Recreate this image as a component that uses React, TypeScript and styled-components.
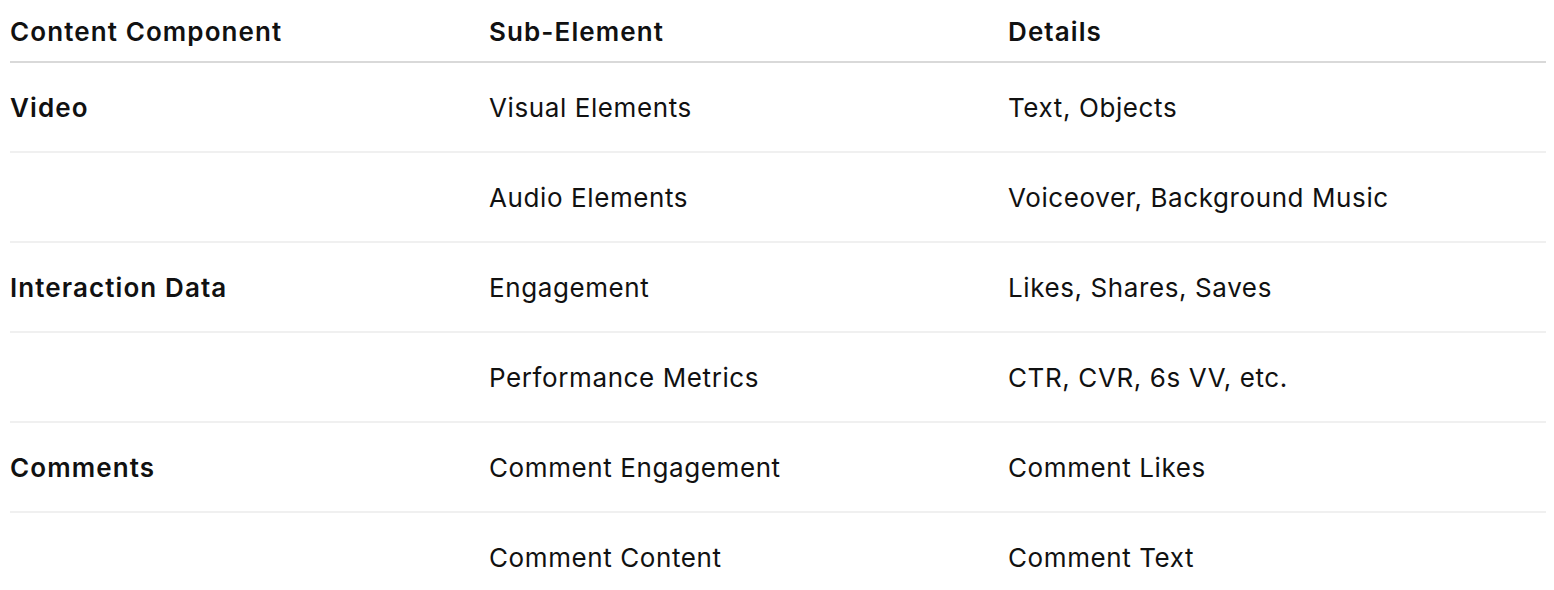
import React from 'react';
import styled, { createGlobalStyle } from 'styled-components';

const GlobalStyle = createGlobalStyle`
  body {
    margin: 0;
    background: #fff;
    font-family: Inter, "Noto Sans", "Liberation Sans", sans-serif;
    color: #111;
  }
`;

const Wrap = styled.div`
  padding: 0 8px 0 10px;
`;

const Row = styled.div<{ head?: boolean }>`
  display: grid;
  grid-template-columns: 479px 519px 1fr;
  align-items: center;
  height: ${p => (p.head ? '61px' : '88px')};
  border-bottom: 2px solid ${p => (p.head ? '#d9d9d9' : '#f0f0f0')};
`;

const Cell = styled.div<{ bold?: boolean }>`
  font-size: 26px;
  font-weight: ${p => (p.bold ? 600 : 400)};
  letter-spacing: ${p => (p.bold ? '1.1px' : '0.6px')};
  white-space: nowrap;
  padding-top: 1px;
`;

const rows = [
  { comp: 'Video', sub: 'Visual Elements', details: 'Text, Objects' },
  { comp: '', sub: 'Audio Elements', details: 'Voiceover, Background Music' },
  { comp: 'Interaction Data', sub: 'Engagement', details: 'Likes, Shares, Saves' },
  { comp: '', sub: 'Performance Metrics', details: 'CTR, CVR, 6s VV, etc.' },
  { comp: 'Comments', sub: 'Comment Engagement', details: 'Comment Likes' },
  { comp: '', sub: 'Comment Content', details: 'Comment Text' },
];

const App = () => (
  <>
    <GlobalStyle />
    <Wrap>
      <Row head>
        <Cell bold>Content Component</Cell>
        <Cell bold>Sub-Element</Cell>
        <Cell bold>Details</Cell>
      </Row>
      {rows.map((r, i) => (
        <Row key={i}>
          <Cell bold>{r.comp}</Cell>
          <Cell>{r.sub}</Cell>
          <Cell>{r.details}</Cell>
        </Row>
      ))}
    </Wrap>
  </>
);

export default App;
